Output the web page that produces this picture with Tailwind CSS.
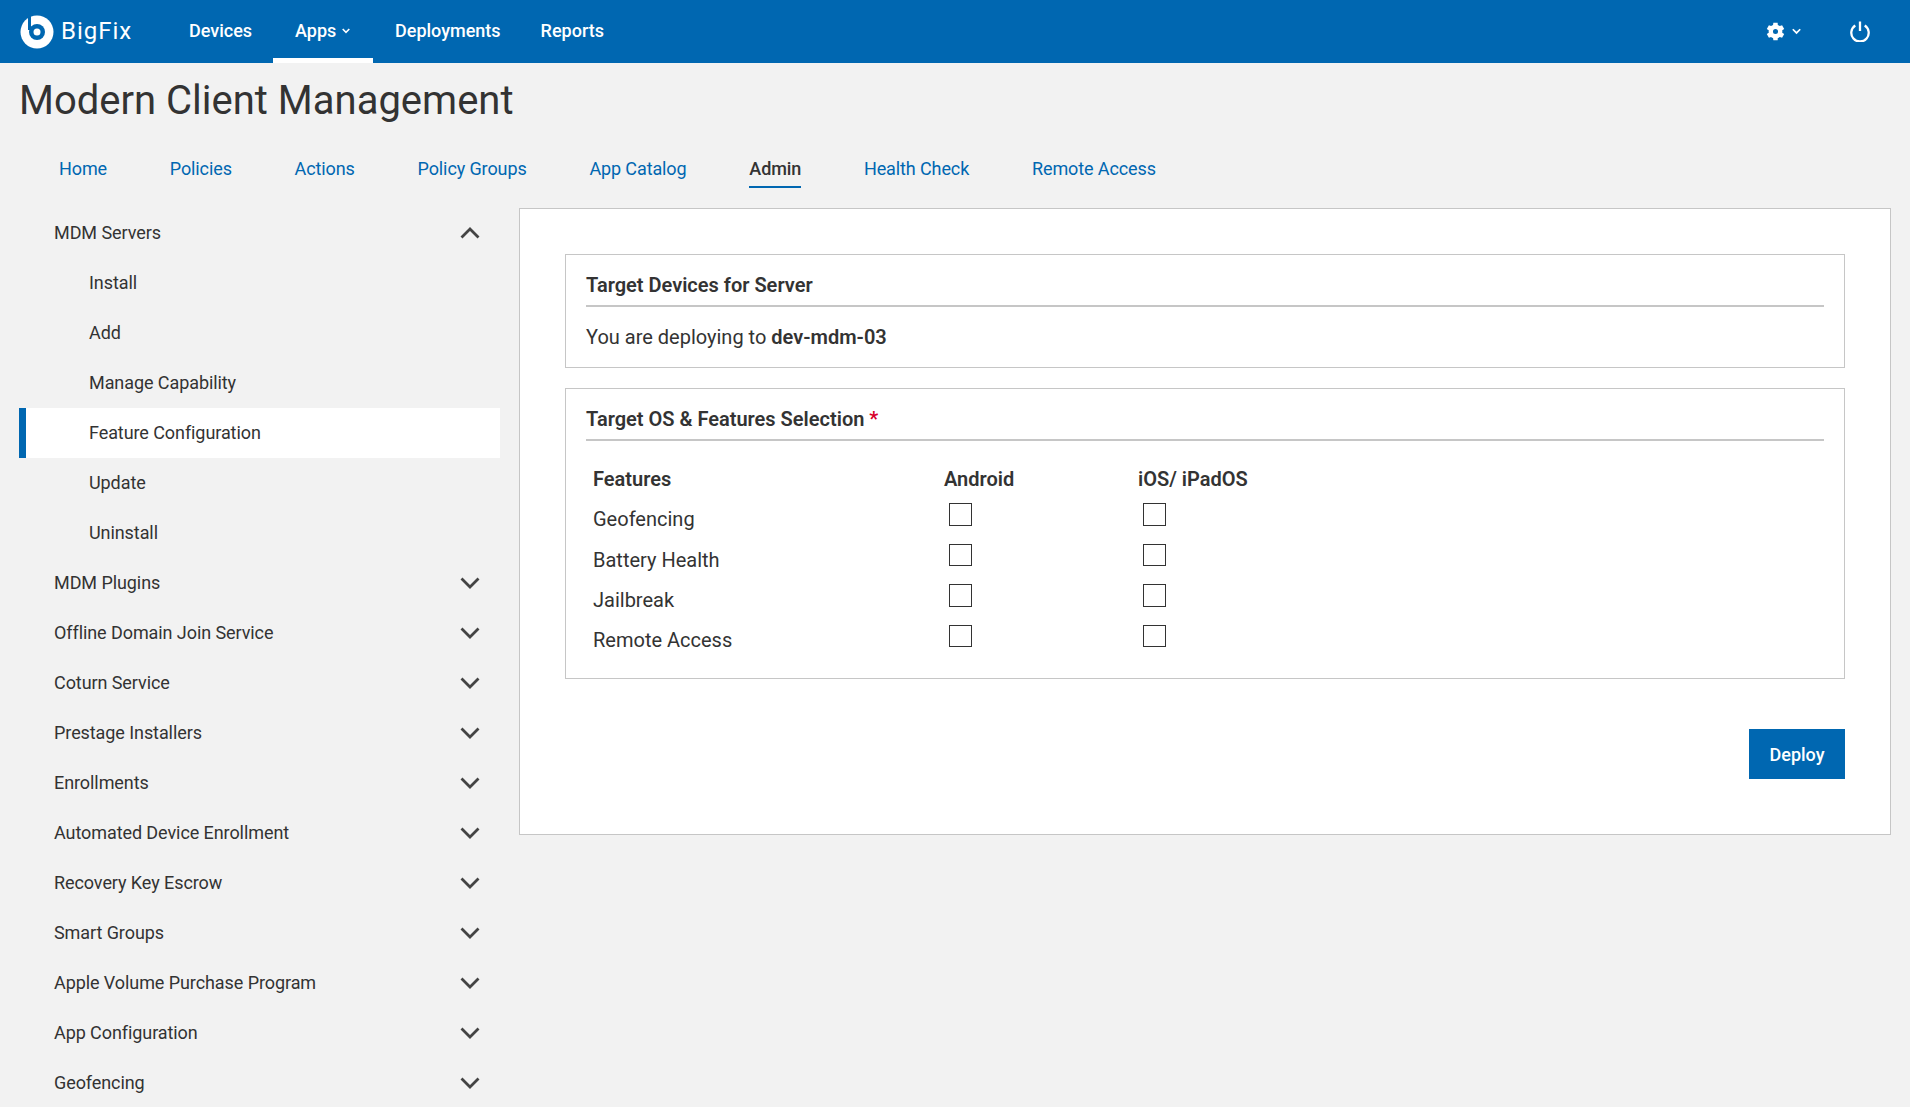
<!DOCTYPE html>
<html>
<head>
<meta charset="utf-8">
<script src="https://cdn.jsdelivr.net/npm/@tailwindcss/browser@4"></script>
<title>BigFix</title>
</head>
<body class="h-[1107px] overflow-hidden bg-[#f2f2f2] font-[Roboto,sans-serif] text-[#333333]">
<header class="flex h-[63px] items-center bg-[#0067b1] text-white">
  <div class="ml-[20px] flex w-[148px] items-center gap-[7px]">
    <svg class="h-[34px] w-[34px]" viewBox="0 0 34 34"><circle cx="17" cy="17" r="16.500" fill="#fff"/><circle cx="17" cy="17" r="8" fill="#0067b1"/><rect x="8" y="0" width="3" height="15" fill="#0067b1"/><circle cx="17" cy="17" r="3.500" fill="#fff"/></svg>
    <span class="pb-[1px] text-[24px] leading-[30px] tracking-[1px]">BigFix</span>
  </div>
  <nav class="flex h-full items-stretch text-[18px] font-medium">
    <a class="flex w-[105px] items-center pb-[2px] pl-[21px]">Devices</a>
    <a class="flex w-[100px] items-center gap-[6px] border-b-[5px] border-white pl-[22px] pt-[3px]">Apps<svg class="h-[8px] w-[8px]" viewBox="0 0 8 8"><path d="M0.700 2 L4 5.300 L7.300 2" fill="none" stroke="#fff" stroke-width="1.600"/></svg></a>
    <a class="flex items-center pb-[2px] pl-[22px] pr-[20px]">Deployments</a>
    <a class="flex items-center pb-[2px] px-[20px]">Reports</a>
  </nav>
  <div class="ml-auto mr-[40px] flex items-center">
    <svg class="h-[19px] w-[19px]" viewBox="0 0 24 24"><path fill="#fff" fill-rule="evenodd" d="M20.500 13.500a8.600 8.600 0 0 0 0-3L23 8.700 20.300 4l-2.900 1.200a8.600 8.600 0 0 0-2.500-1.500L14.700 1H9.300l-.4 2.700a8.600 8.600 0 0 0-2.500 1.500L3.700 4 1 8.700l2.500 1.800a8.600 8.600 0 0 0 0 3L1 15.300 3.700 20l2.700-1.200a8.600 8.600 0 0 0 2.500 1.500l.4 2.700h5.400l.2-2.700a8.600 8.600 0 0 0 2.500-1.500l2.900 1.200 2.700-4.700ZM12 15.200a3.200 3.200 0 1 1 0-6.400 3.200 3.200 0 0 1 0 6.400Z"/></svg>
    <svg class="ml-[7px] h-[9px] w-[9px]" viewBox="0 0 8 8"><path d="M0.700 2 L4 5.300 L7.300 2" fill="none" stroke="#fff" stroke-width="1.500"/></svg>
    <svg class="ml-[49px] h-[21px] w-[20px]" viewBox="0 0 20 21"><path d="M5.300 4.500 A8.700 8.700 0 1 0 14.700 4.500 M10 0.500 V10" fill="none" stroke="#fff" stroke-width="2.300"/></svg>
  </div>
</header>

<h1 class="ml-[19px] mt-[13px] text-[40px] leading-[50px] font-normal text-[#333333]">Modern Client Management</h1>

<nav class="ml-[59px] mt-[31px] flex h-[36px] items-start gap-[62.800px] text-[18px] leading-[24px] tracking-[-0.11px] text-[#0067b1]">
  <a>Home</a><a>Policies</a><a>Actions</a><a>Policy Groups</a><a>App Catalog</a>
  <a class="border-b-2 border-[#0067b1] pb-[5px] font-medium text-[#333333]">Admin</a>
  <a>Health Check</a><a>Remote Access</a>
</nav>

<main class="mt-[15px] flex items-start">
  <aside class="ml-[19px] w-[481px] text-[18px] tracking-[-0.08px]">
    <div class="flex h-[50px] items-center pl-[35px] pr-[20px]"><span class="pb-[2px]">MDM Servers</span><svg class="ml-auto h-[12px] w-[20px]" viewBox="0 0 20 12"><path d="M1.500 10.500 L10 2 L18.500 10.500" fill="none" stroke="#444" stroke-width="2.800"/></svg></div>
    <div class="flex h-[50px] items-center pb-[2px] pl-[70px]">Install</div>
    <div class="flex h-[50px] items-center pb-[2px] pl-[70px]">Add</div>
    <div class="flex h-[50px] items-center pb-[2px] pl-[70px]">Manage Capability</div>
    <div class="flex h-[50px] items-center border-l-[7px] border-[#0067b1] bg-white pb-[2px] pl-[63px]">Feature Configuration</div>
    <div class="flex h-[50px] items-center pb-[2px] pl-[70px]">Update</div>
    <div class="flex h-[50px] items-center pb-[2px] pl-[70px]">Uninstall</div>
    <div class="flex h-[50px] items-center pl-[35px] pr-[20px]"><span class="pb-[2px]">MDM Plugins</span><svg class="ml-auto h-[12px] w-[20px]" viewBox="0 0 20 12"><path d="M1.500 1.500 L10 10 L18.500 1.500" fill="none" stroke="#444" stroke-width="2.800"/></svg></div>
    <div class="flex h-[50px] items-center pl-[35px] pr-[20px]"><span class="pb-[2px]">Offline Domain Join Service</span><svg class="ml-auto h-[12px] w-[20px]" viewBox="0 0 20 12"><path d="M1.500 1.500 L10 10 L18.500 1.500" fill="none" stroke="#444" stroke-width="2.800"/></svg></div>
    <div class="flex h-[50px] items-center pl-[35px] pr-[20px]"><span class="pb-[2px]">Coturn Service</span><svg class="ml-auto h-[12px] w-[20px]" viewBox="0 0 20 12"><path d="M1.500 1.500 L10 10 L18.500 1.500" fill="none" stroke="#444" stroke-width="2.800"/></svg></div>
    <div class="flex h-[50px] items-center pl-[35px] pr-[20px]"><span class="pb-[2px]">Prestage Installers</span><svg class="ml-auto h-[12px] w-[20px]" viewBox="0 0 20 12"><path d="M1.500 1.500 L10 10 L18.500 1.500" fill="none" stroke="#444" stroke-width="2.800"/></svg></div>
    <div class="flex h-[50px] items-center pl-[35px] pr-[20px]"><span class="pb-[2px]">Enrollments</span><svg class="ml-auto h-[12px] w-[20px]" viewBox="0 0 20 12"><path d="M1.500 1.500 L10 10 L18.500 1.500" fill="none" stroke="#444" stroke-width="2.800"/></svg></div>
    <div class="flex h-[50px] items-center pl-[35px] pr-[20px]"><span class="pb-[2px]">Automated Device Enrollment</span><svg class="ml-auto h-[12px] w-[20px]" viewBox="0 0 20 12"><path d="M1.500 1.500 L10 10 L18.500 1.500" fill="none" stroke="#444" stroke-width="2.800"/></svg></div>
    <div class="flex h-[50px] items-center pl-[35px] pr-[20px]"><span class="pb-[2px]">Recovery Key Escrow</span><svg class="ml-auto h-[12px] w-[20px]" viewBox="0 0 20 12"><path d="M1.500 1.500 L10 10 L18.500 1.500" fill="none" stroke="#444" stroke-width="2.800"/></svg></div>
    <div class="flex h-[50px] items-center pl-[35px] pr-[20px]"><span class="pb-[2px]">Smart Groups</span><svg class="ml-auto h-[12px] w-[20px]" viewBox="0 0 20 12"><path d="M1.500 1.500 L10 10 L18.500 1.500" fill="none" stroke="#444" stroke-width="2.800"/></svg></div>
    <div class="flex h-[50px] items-center pl-[35px] pr-[20px]"><span class="pb-[2px]">Apple Volume Purchase Program</span><svg class="ml-auto h-[12px] w-[20px]" viewBox="0 0 20 12"><path d="M1.500 1.500 L10 10 L18.500 1.500" fill="none" stroke="#444" stroke-width="2.800"/></svg></div>
    <div class="flex h-[50px] items-center pl-[35px] pr-[20px]"><span class="pb-[2px]">App Configuration</span><svg class="ml-auto h-[12px] w-[20px]" viewBox="0 0 20 12"><path d="M1.500 1.500 L10 10 L18.500 1.500" fill="none" stroke="#444" stroke-width="2.800"/></svg></div>
    <div class="flex h-[50px] items-center pl-[35px] pr-[20px]"><span class="pb-[2px]">Geofencing</span><svg class="ml-auto h-[12px] w-[20px]" viewBox="0 0 20 12"><path d="M1.500 1.500 L10 10 L18.500 1.500" fill="none" stroke="#444" stroke-width="2.800"/></svg></div>
  </aside>

  <section class="ml-[19px] h-[627px] w-[1372px] border border-[#c6c6c6] bg-white px-[45px] pt-[45px]">
    <div class="h-[114px] border border-[#c6c6c6] px-[20px]">
      <h2 class="h-[52px] border-b-2 border-[#c6c6c6] pt-[16px] text-[20px] leading-[28px] font-semibold">Target Devices for Server</h2>
      <p class="mt-[16px] text-[20px] leading-[28px]">You are deploying to <b class="font-semibold">dev-mdm-03</b></p>
    </div>
    <div class="mt-[20px] h-[291px] border border-[#c6c6c6] px-[20px]">
      <h2 class="h-[52px] border-b-2 border-[#c6c6c6] pt-[16px] text-[20px] leading-[28px] font-semibold">Target OS &amp; Features Selection <span class="text-[#d8002a]">*</span></h2>
      <div class="ml-[7px] mt-[24px] grid grid-cols-[351px_194px_1fr] text-[20px] leading-[28px]">
        <div class="h-[35px] font-semibold">Features</div><div class="h-[35px] font-semibold">Android</div><div class="h-[35px] font-semibold">iOS/ iPadOS</div>
        <div class="h-[41px] pt-[5px]">Geofencing</div><div class="h-[41px] pl-[5px] pt-[3px]"><div class="h-[23px] w-[23px] border border-[#333]"></div></div><div class="h-[41px] pl-[5px] pt-[3px]"><div class="h-[23px] w-[23px] border border-[#333]"></div></div>
        <div class="h-[40px] pt-[5px]">Battery Health</div><div class="h-[40px] pl-[5px] pt-[3px]"><div class="h-[22px] w-[23px] border border-[#333]"></div></div><div class="h-[40px] pl-[5px] pt-[3px]"><div class="h-[22px] w-[23px] border border-[#333]"></div></div>
        <div class="h-[41px] pt-[5px]">Jailbreak</div><div class="h-[41px] pl-[5px] pt-[3px]"><div class="h-[23px] w-[23px] border border-[#333]"></div></div><div class="h-[41px] pl-[5px] pt-[3px]"><div class="h-[23px] w-[23px] border border-[#333]"></div></div>
        <div class="h-[41px] pt-[4px]">Remote Access</div><div class="h-[41px] pl-[5px] pt-[3px]"><div class="h-[22px] w-[23px] border border-[#333]"></div></div><div class="h-[41px] pl-[5px] pt-[3px]"><div class="h-[22px] w-[23px] border border-[#333]"></div></div>
      </div>
    </div>
    <div class="mt-[50px] flex justify-end">
      <button class="h-[50px] w-[96px] bg-[#0067b1] text-[18px] font-medium text-white">Deploy</button>
    </div>
  </section>
</main>
</body>
</html>
